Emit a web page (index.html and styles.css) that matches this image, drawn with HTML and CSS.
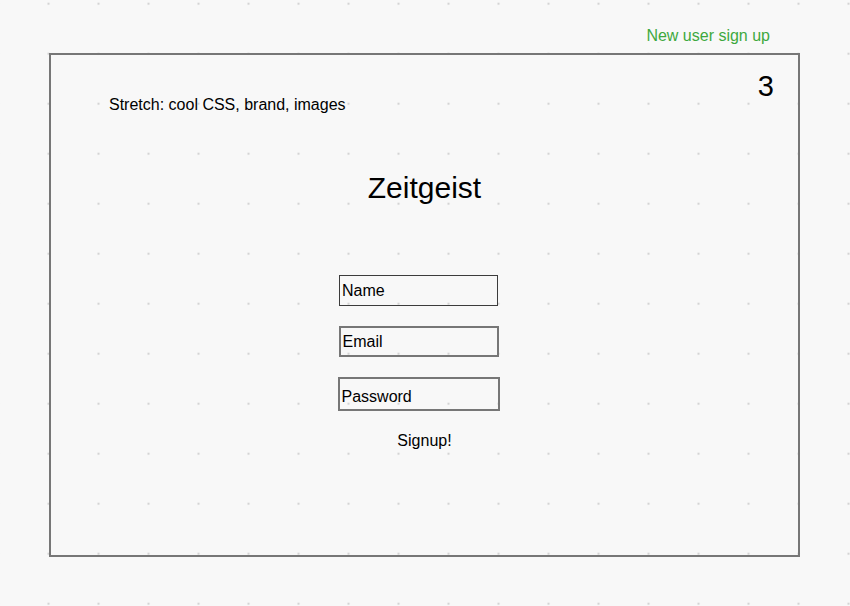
FILE: index.html
```html
<!DOCTYPE html>
<html lang="en">
<head>
<meta charset="utf-8">
<title>Zeitgeist signup</title>
<link rel="stylesheet" href="styles.css">
</head>
<body>
<header class="topbar">
  <a class="signup-link" href="#">New user sign up</a>
</header>
<main class="frame">
  <div class="frame-top">
    <p class="note">Stretch: cool CSS, brand, images</p>
    <span class="page-num">3</span>
  </div>
  <h1 class="brand">Zeitgeist</h1>
  <form class="form">
    <div class="field field-name">Name</div>
    <div class="field field-email">Email</div>
    <div class="field field-password">Password</div>
    <div class="submit">Signup!</div>
  </form>
</main>
</body>
</html>
```
FILE: styles.css
```css
html, body {
  margin: 0;
  padding: 0;
}
body {
  width: 850px;
  height: 606px;
  overflow: hidden;
  font-family: "Liberation Sans", Arial, sans-serif;
  color: #000;
  background-color: #f8f8f8;
  background-image: radial-gradient(circle, #d4d4d4 0, #d4d4d4 1px, rgba(248,248,248,0) 1.6px);
  background-size: 50px 50px;
  background-position: 23.5px -21.3px;
}
.topbar {
  height: 53px;
  box-sizing: border-box;
  padding: 27px 80px 0 0;
  text-align: right;
  font-size: 16px;
  line-height: 18px;
}
.signup-link {
  color: #3ea83e;
  text-decoration: none;
}
.frame {
  display: block;
  margin-left: 49px;
  width: 751px;
  height: 504px;
  box-sizing: border-box;
  border: 2px solid #777;
}
.frame-top {
  display: flex;
  justify-content: space-between;
  align-items: flex-start;
  padding: 15px 24px 0 58px;
}
.note {
  margin: 26px 0 0;
  font-size: 16px;
  line-height: 18px;
}
.page-num {
  font-size: 29px;
  line-height: 33px;
}
.brand {
  margin: 57px 0 0;
  text-align: center;
  font-size: 30px;
  line-height: 34px;
  font-weight: normal;
}
.form {
  display: flex;
  flex-direction: column;
  align-items: center;
  margin-top: 70px;
  padding-right: 12px;
  font-size: 16px;
  line-height: 18px;
}
.field {
  box-sizing: border-box;
  height: 31px;
  padding: 5px 0 0 2px;
  border: 2px solid #777;
}
.field-name {
  width: 159px;
  border-color: #3c3c3c;
  border-width: 1.5px;
  padding-top: 6px;
  padding-left: 2px;
}
.field-email {
  width: 160px;
  margin-top: 20px;
  padding-left: 2px;
}
.field-password {
  width: 162px;
  height: 34px;
  margin-top: 20px;
  padding-top: 9px;
  padding-left: 2px;
}
.submit {
  margin: 21px 0 0 12px;
}
```
